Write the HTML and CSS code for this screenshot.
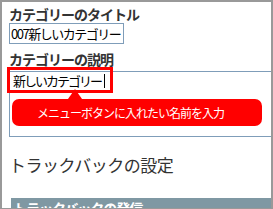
FILE: index.html
```html
<!DOCTYPE html>
<html lang="ja">
<head>
  <meta charset="UTF-8">
  <title>カテゴリーの設定</title>
  <link rel="stylesheet" href="styles.css">
</head>
<body>
  <div class="frame">
    <!-- カテゴリー -->
    <div class="label">カテゴリーのタイトル</div>
    <div class="field">007新しいカテゴリー</div>

    <div class="label label-desc">カテゴリーの説明</div>
    <div class="area-wrap">
      <div class="area"><span class="typed">新しいカテゴリー</span><span class="caret"></span></div>
      <!-- 注釈 -->
      <div class="mark"></div>
      <div class="tip-arrow"></div>
      <div class="tip">メニューボタンに入れたい名前を入力</div>
    </div>

    <!-- トラックバック -->
    <div class="section-title">トラックバックの設定</div>
    <div class="section-bar">トラックバックの発信</div>
  </div>
</body>
</html>
```

FILE: styles.css
```css
* {
  margin: 0;
  padding: 0;
  box-sizing: border-box;
}
body {
  background: #fff;
  font-family: "Noto Sans CJK JP", "Noto Sans", sans-serif;
  color: #333;
}
/* 外枠 */
.frame {
  width: 273px;
  height: 209px;
  border: 2px solid #999;
  border-bottom-width: 1px;
  padding: 4px 0 0 7px;
  overflow: hidden;
}
.label {
  font-size: 14px;
  line-height: 16px;
  font-weight: bold;
  letter-spacing: -1px;
  white-space: nowrap;
}
.label-desc {
  margin-top: 7px;
}
.field {
  margin-top: 1px;
  width: 115px;
  height: 21px;
  border: 1px solid #7f9db9;
  padding: 0 0 0 1px;
  font-size: 13px;
  line-height: 19px;
  letter-spacing: -1.5px;
  color: #000;
  white-space: nowrap;
  overflow: hidden;
}
/* 説明欄 */
.area-wrap {
  position: relative;
  margin-top: 4px;
  width: 280px;
}
.area {
  height: 66px;
  border: 1px solid #7f9db9;
  padding: 1px 0 0 3px;
  font-size: 13px;
  line-height: 16px;
  letter-spacing: -2px;
  color: #000;
  display: flex;
  align-items: flex-start;
}
.caret {
  display: inline-block;
  width: 1px;
  height: 14px;
  margin: 1px 0 0 3px;
  background: #000;
}
.mark {
  position: absolute;
  left: -2px;
  top: -4px;
  width: 106px;
  height: 26px;
  border: 3px solid #f00;
}
.tip-arrow {
  position: absolute;
  left: 59px;
  top: 18px;
  border-left: 7px solid transparent;
  border-right: 7px solid transparent;
  border-bottom: 10px solid #f00;
}
.tip {
  position: absolute;
  left: 3px;
  top: 28px;
  width: 250px;
  height: 27px;
  background: #f00;
  border-radius: 7px;
  color: #fff;
  font-size: 12px;
  line-height: 27px;
  letter-spacing: -1px;
  padding-left: 25px;
  white-space: nowrap;
}
/* トラックバック */
.section-title {
  margin-top: 18px;
  font-size: 17px;
  line-height: 20px;
  letter-spacing: -0.5px;
  white-space: nowrap;
}
.section-bar {
  margin-top: 23px;
  margin-left: 2px;
  height: 10px;
  background: #7f98a3;
  color: #fff;
  font-size: 14px;
  font-weight: bold;
  line-height: 18px;
  padding: 1px 0 0 2px;
  letter-spacing: -1px;
  white-space: nowrap;
  overflow: hidden;
}
```
